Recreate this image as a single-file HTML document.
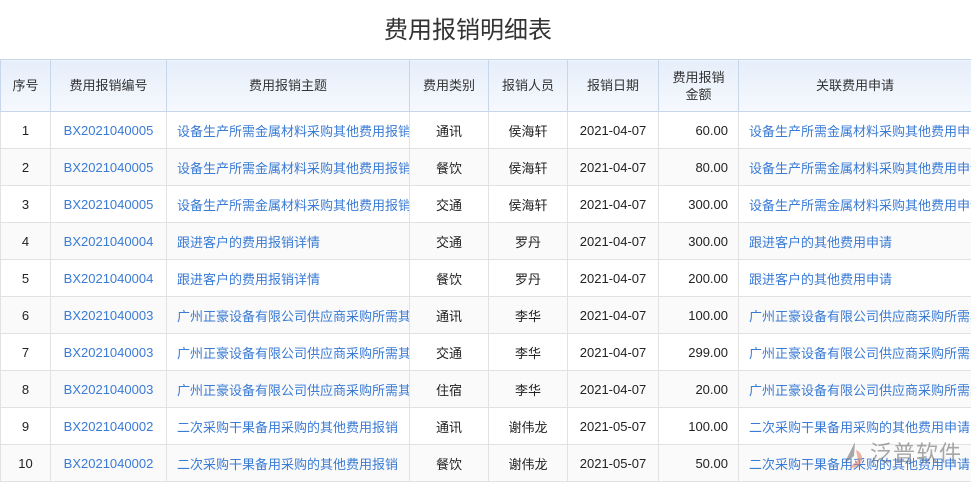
<!DOCTYPE html>
<html><head><meta charset="utf-8"><style>
body{margin:0;width:971px;height:482px;overflow:hidden;background:#fff;font-family:"Liberation Sans","Noto Sans CJK SC",sans-serif;position:relative;}
h1{margin:0;position:absolute;top:14px;left:0;width:936px;text-align:center;font-size:24px;font-weight:normal;color:#333;line-height:34px;}
table{position:absolute;top:59px;left:0;width:971px;border-collapse:collapse;table-layout:fixed;font-size:13px;color:#222;}
th{height:51px;background:linear-gradient(#e6eefa,#f6f9fe);border:1px solid #c6d7ec;font-weight:normal;color:#333;line-height:17px;padding:0;}
td{height:36px;border:1px solid #e2e2e2;text-align:center;white-space:nowrap;overflow:hidden;padding:0;}
tr:nth-child(odd) td{background:#fafafa;}
td div{overflow:hidden;white-space:nowrap;}
td.l div{text-align:left;padding-left:10px;color:#3a7bd5;}
td.b{color:#3a7bd5;}
td.r{text-align:right;padding-right:10px;}
.wm{position:absolute;left:870px;top:436px;font-size:22px;color:rgba(110,110,110,.6);letter-spacing:1px;white-space:nowrap;}
</style></head><body>
<h1>费用报销明细表</h1>
<table>
<colgroup><col style="width:50px"><col style="width:116px"><col style="width:243px"><col style="width:79px"><col style="width:79px"><col style="width:91px"><col style="width:80px"><col style="width:233px"></colgroup>
<tr><th>序号</th><th>费用报销编号</th><th>费用报销主题</th><th>费用类别</th><th>报销人员</th><th>报销日期</th><th>费用报销<br>金额</th><th>关联费用申请</th></tr>
<tr><td>1</td><td class="b">BX2021040005</td><td class="l"><div>设备生产所需金属材料采购其他费用报销</div></td><td>通讯</td><td>侯海轩</td><td>2021-04-07</td><td class="r">60.00</td><td class="l"><div>设备生产所需金属材料采购其他费用申请</div></td></tr>
<tr><td>2</td><td class="b">BX2021040005</td><td class="l"><div>设备生产所需金属材料采购其他费用报销</div></td><td>餐饮</td><td>侯海轩</td><td>2021-04-07</td><td class="r">80.00</td><td class="l"><div>设备生产所需金属材料采购其他费用申请</div></td></tr>
<tr><td>3</td><td class="b">BX2021040005</td><td class="l"><div>设备生产所需金属材料采购其他费用报销</div></td><td>交通</td><td>侯海轩</td><td>2021-04-07</td><td class="r">300.00</td><td class="l"><div>设备生产所需金属材料采购其他费用申请</div></td></tr>
<tr><td>4</td><td class="b">BX2021040004</td><td class="l"><div>跟进客户的费用报销详情</div></td><td>交通</td><td>罗丹</td><td>2021-04-07</td><td class="r">300.00</td><td class="l"><div>跟进客户的其他费用申请</div></td></tr>
<tr><td>5</td><td class="b">BX2021040004</td><td class="l"><div>跟进客户的费用报销详情</div></td><td>餐饮</td><td>罗丹</td><td>2021-04-07</td><td class="r">200.00</td><td class="l"><div>跟进客户的其他费用申请</div></td></tr>
<tr><td>6</td><td class="b">BX2021040003</td><td class="l"><div>广州正豪设备有限公司供应商采购所需其他费用报销</div></td><td>通讯</td><td>李华</td><td>2021-04-07</td><td class="r">100.00</td><td class="l"><div>广州正豪设备有限公司供应商采购所需其他费用申请</div></td></tr>
<tr><td>7</td><td class="b">BX2021040003</td><td class="l"><div>广州正豪设备有限公司供应商采购所需其他费用报销</div></td><td>交通</td><td>李华</td><td>2021-04-07</td><td class="r">299.00</td><td class="l"><div>广州正豪设备有限公司供应商采购所需其他费用申请</div></td></tr>
<tr><td>8</td><td class="b">BX2021040003</td><td class="l"><div>广州正豪设备有限公司供应商采购所需其他费用报销</div></td><td>住宿</td><td>李华</td><td>2021-04-07</td><td class="r">20.00</td><td class="l"><div>广州正豪设备有限公司供应商采购所需其他费用申请</div></td></tr>
<tr><td>9</td><td class="b">BX2021040002</td><td class="l"><div>二次采购干果备用采购的其他费用报销</div></td><td>通讯</td><td>谢伟龙</td><td>2021-05-07</td><td class="r">100.00</td><td class="l"><div>二次采购干果备用采购的其他费用申请</div></td></tr>
<tr><td>10</td><td class="b">BX2021040002</td><td class="l"><div>二次采购干果备用采购的其他费用报销</div></td><td>餐饮</td><td>谢伟龙</td><td>2021-05-07</td><td class="r">50.00</td><td class="l"><div>二次采购干果备用采购的其他费用申请</div></td></tr>
</table>
<svg style="position:absolute;left:840px;top:440px" width="30" height="30" viewBox="0 0 30 30"><path d="M15 2 L4 24 L14 16 Z" fill="rgba(110,110,110,.6)"/><path d="M16 10 A9 9 0 1 1 10 27 L18 20 Z" fill="rgba(230,130,100,.6)"/></svg>
<div class="wm">泛普软件</div>
</body></html>
